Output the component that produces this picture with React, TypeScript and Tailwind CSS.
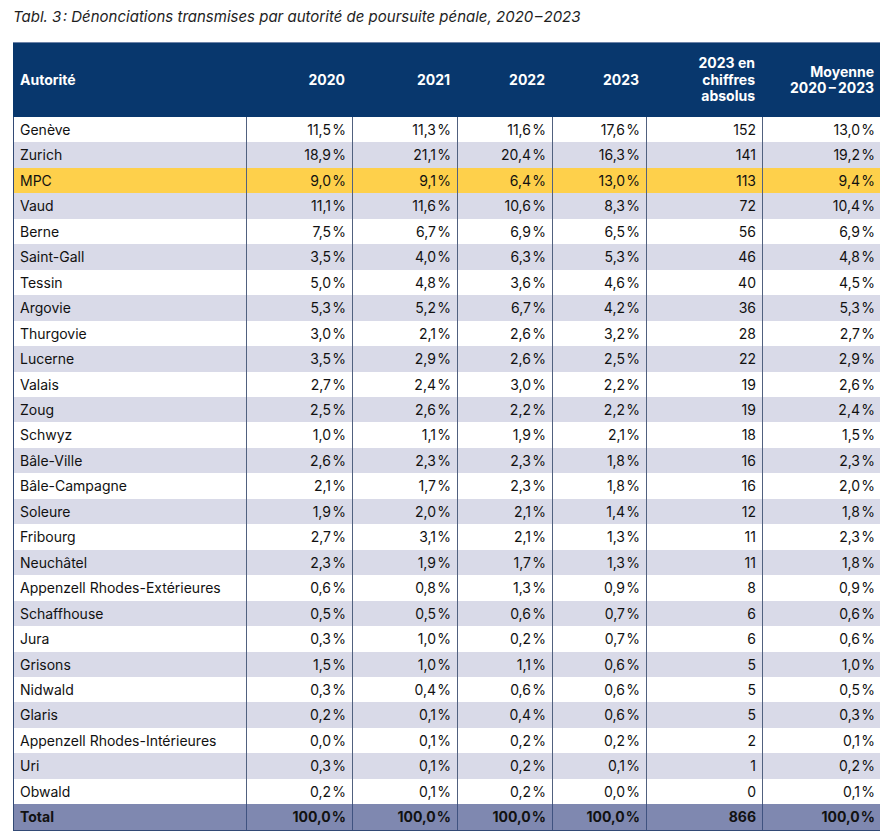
import React from "react";

type Row = [string, string, string, string, string, string, string];

const rows: Row[] = [
  ["Genève", "11,5", "11,3", "11,6", "17,6", "152", "13,0"],
  ["Zurich", "18,9", "21,1", "20,4", "16,3", "141", "19,2"],
  ["MPC", "9,0", "9,1", "6,4", "13,0", "113", "9,4"],
  ["Vaud", "11,1", "11,6", "10,6", "8,3", "72", "10,4"],
  ["Berne", "7,5", "6,7", "6,9", "6,5", "56", "6,9"],
  ["Saint-Gall", "3,5", "4,0", "6,3", "5,3", "46", "4,8"],
  ["Tessin", "5,0", "4,8", "3,6", "4,6", "40", "4,5"],
  ["Argovie", "5,3", "5,2", "6,7", "4,2", "36", "5,3"],
  ["Thurgovie", "3,0", "2,1", "2,6", "3,2", "28", "2,7"],
  ["Lucerne", "3,5", "2,9", "2,6", "2,5", "22", "2,9"],
  ["Valais", "2,7", "2,4", "3,0", "2,2", "19", "2,6"],
  ["Zoug", "2,5", "2,6", "2,2", "2,2", "19", "2,4"],
  ["Schwyz", "1,0", "1,1", "1,9", "2,1", "18", "1,5"],
  ["Bâle-Ville", "2,6", "2,3", "2,3", "1,8", "16", "2,3"],
  ["Bâle-Campagne", "2,1", "1,7", "2,3", "1,8", "16", "2,0"],
  ["Soleure", "1,9", "2,0", "2,1", "1,4", "12", "1,8"],
  ["Fribourg", "2,7", "3,1", "2,1", "1,3", "11", "2,3"],
  ["Neuchâtel", "2,3", "1,9", "1,7", "1,3", "11", "1,8"],
  ["Appenzell Rhodes-Extérieures", "0,6", "0,8", "1,3", "0,9", "8", "0,9"],
  ["Schaffhouse", "0,5", "0,5", "0,6", "0,7", "6", "0,6"],
  ["Jura", "0,3", "1,0", "0,2", "0,7", "6", "0,6"],
  ["Grisons", "1,5", "1,0", "1,1", "0,6", "5", "1,0"],
  ["Nidwald", "0,3", "0,4", "0,6", "0,6", "5", "0,5"],
  ["Glaris", "0,2", "0,1", "0,4", "0,6", "5", "0,3"],
  ["Appenzell Rhodes-Intérieures", "0,0", "0,1", "0,2", "0,2", "2", "0,1"],
  ["Uri", "0,3", "0,1", "0,2", "0,1", "1", "0,2"],
  ["Obwald", "0,2", "0,1", "0,2", "0,0", "0", "0,1"],
];

const pct = (v: string) => `${v}\u200a%`;

const gridCols = "grid grid-cols-[232px_106px_105px_95px_94px_116px_119px]";

export default function App() {
  return (
    <div
      className="w-[883px] h-[833px] bg-white text-[#111]"
      style={{ fontFamily: "Inter, 'Noto Sans', sans-serif" }}
    >
      <div className="pl-[13px] pt-[7px] h-[42px] italic text-[15px] leading-[20px] text-[#1e1e1e] whitespace-nowrap">
        Tabl. 3{"\u200a"}: Dénonciations transmises par autorité de poursuite pénale, 2020{"\u200a"}–{"\u200a"}2023
      </div>
      <div className="ml-[13px] w-[867px] border-t border-[#6d83a8]">
        <div className={`${gridCols} h-[74px] bg-[#08376d] text-white font-bold text-[14px] leading-[16.5px]`}>
          <div className="flex items-center pl-[7px]">Autorité</div>
          <div className="flex items-center justify-end pr-[6px]">2020</div>
          <div className="flex items-center justify-end pr-[6px]">2021</div>
          <div className="flex items-center justify-end pr-[6px]">2022</div>
          <div className="flex items-center justify-end pr-[6px]">2023</div>
          <div className="flex items-center justify-end pr-[6px] text-right">
            2023 en
            <br />
            chiffres
            <br />
            absolus
          </div>
          <div className="flex items-center justify-end pr-[6px] text-right">
            Moyenne
            <br />
            2020{"\u2009"}–{"\u2009"}2023
          </div>
        </div>
        <div className="border-l border-[#334a75] border-b">
          {rows.map((r, i) => {
            const bg =
              r[0] === "MPC"
                ? "bg-[#fed04b]"
                : i % 2 === 1
                ? "bg-[#d9dae8]"
                : "bg-white";
            return (
              <div
                key={r[0]}
                className={`${gridCols} h-[25.46px] ${bg} text-[14px] leading-[25px]`}
              >
                <div className="pl-[6px] whitespace-nowrap">{r[0]}</div>
                <div className="text-right pr-[6px] border-l-[1.5px] border-[#51617f]">{pct(r[1])}</div>
                <div className="text-right pr-[6px] border-l-[1.5px] border-[#51617f]">{pct(r[2])}</div>
                <div className="text-right pr-[6px] border-l-[1.5px] border-[#51617f]">{pct(r[3])}</div>
                <div className="text-right pr-[6px] border-l-[1.5px] border-[#51617f]">{pct(r[4])}</div>
                <div className="text-right pr-[6px] border-l-[1.5px] border-[#51617f]">{r[5]}</div>
                <div className="text-right pr-[6px] border-l-[1.5px] border-[#51617f]">{pct(r[6])}</div>
              </div>
            );
          })}
          <div className={`${gridCols} h-[25.46px] bg-[#7f88b0] text-[14px] leading-[25px] font-bold text-[#111]`}>
            <div className="pl-[6px]">Total</div>
            <div className="text-right pr-[6px] border-l-[1.5px] border-[#3f5280]">{pct("100,0")}</div>
            <div className="text-right pr-[6px] border-l-[1.5px] border-[#3f5280]">{pct("100,0")}</div>
            <div className="text-right pr-[6px] border-l-[1.5px] border-[#3f5280]">{pct("100,0")}</div>
            <div className="text-right pr-[6px] border-l-[1.5px] border-[#3f5280]">{pct("100,0")}</div>
            <div className="text-right pr-[6px] border-l-[1.5px] border-[#3f5280]">866</div>
            <div className="text-right pr-[6px] border-l-[1.5px] border-[#3f5280]">{pct("100,0")}</div>
          </div>
        </div>
      </div>
    </div>
  );
}
